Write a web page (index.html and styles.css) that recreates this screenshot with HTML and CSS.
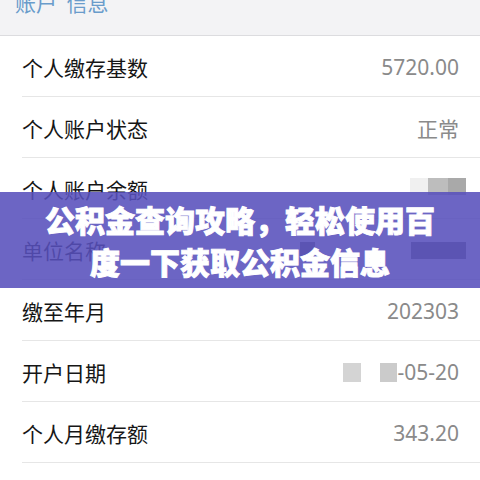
FILE: index.html
```html
<!DOCTYPE html>
<html lang="zh">
<head>
<meta charset="utf-8">
<link rel="stylesheet" href="styles.css">
</head>
<body>
<div class="page">
  <div class="header"><span class="header-text">账户&nbsp;&nbsp;信息</span></div>
  <ul class="list">
    <li class="row"><span class="label">个人缴存基数</span><span class="value">5720.00</span></li>
    <li class="row"><span class="label">个人账户状态</span><span class="value">正常</span></li>
    <li class="row"><span class="label">个人账户余额</span><span class="value"><i class="blur b-light"></i><i class="blur b-mid"></i><i class="blur b-dark"></i></span></li>
    <li class="row"><span class="label">单位名称</span><span class="value"><i class="blur b-small"></i><i class="gap"></i><i class="blur b-wide"></i></span></li>
    <li class="row"><span class="label">缴至年月</span><span class="value">202303</span></li>
    <li class="row"><span class="label">开户日期</span><span class="value"><i class="blur b-date1"></i><i class="blur b-date2"></i>-05-20</span></li>
    <li class="row"><span class="label">个人月缴存额</span><span class="value">343.20</span></li>
  </ul>
  <div class="banner">公积金查询攻略，轻松使用百度一下获取公积金信息</div>
</div>
</body>
</html>
```

FILE: styles.css
```css
* { box-sizing: border-box; }
html, body { margin: 0; padding: 0; background: #fff; }
.page {
  position: relative;
  width: 480px;
  height: 480px;
  overflow: hidden;
  font-family: "Noto Sans CJK SC", "Noto Sans", sans-serif;
}
.header {
  height: 36px;
  background: #f3f3f5;
  border-bottom: 1px solid #dcdcdf;
  overflow: hidden;
  padding-left: 15px;
}
.header-text {
  display: block;
  margin-top: -10px;
  font-size: 21px;
  line-height: 24px;
  color: #6a9ccb;
}
.list { list-style: none; margin: 0; padding: 0 0 0 22px; }
.row {
  height: 61px;
  border-bottom: 1px solid #e6e6e6;
  display: flex;
  align-items: center;
  justify-content: space-between;
  padding: 2px 21px 0 0;
}
.label { font-size: 21px; color: #161616; line-height: 1; }
.value {
  display: flex;
  align-items: center;
  font-family: "Noto Sans", sans-serif;
  font-size: 21px;
  color: #8a8a8a;
  line-height: 1;
}
.row:nth-child(2) .value { font-family: "Noto Sans CJK SC", sans-serif; }
.blur { display: block; height: 17px; }
.b-light { width: 18px; background: #f0f0f0; margin-top: -6px; }
.b-mid { width: 20px; background: #bdbdbd; margin-top: -6px; }
.b-dark { width: 18px; background: #a9a9a9; margin-top: -6px; margin-right: -7px; }
.b-small { width: 15px; background: #777; }
.gap { display: block; width: 96px; }
.b-wide { width: 55px; background: #777; margin-right: -7px; }
.b-date1 { width: 18px; height: 19px; background: #d4d4d4; margin-right: 19px; }
.b-date2 { width: 17px; height: 19px; background: #cbcbcb; }
.banner {
  position: absolute;
  left: 0;
  right: 0;
  top: 192px;
  height: 96px;
  padding: 6px 40px;
  background: rgba(88, 80, 188, 0.88);
  color: #fff;
  font-family: "Noto Sans CJK SC", sans-serif;
  font-weight: 900;
  -webkit-text-stroke: 0.9px #fff;
  font-size: 30px;
  line-height: 42px;
  text-align: center;
}
```
